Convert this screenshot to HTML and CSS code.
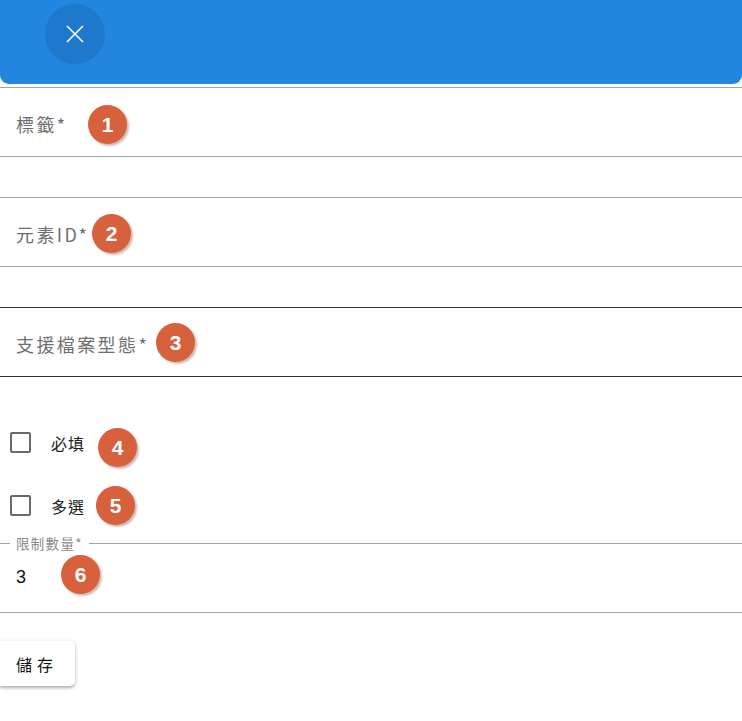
FILE: index.html
```html
<!DOCTYPE html>
<html lang="zh-Hant">
<head>
<meta charset="utf-8">
<title>Form</title>
<link rel="stylesheet" href="styles.css">
</head>
<body>
<div class="page">
  <header class="header">
    <button class="close" aria-label="close">
      <svg width="20" height="20" viewBox="0 0 20 20"><path d="M2 2L18 18M18 2L2 18" stroke="#fff" stroke-width="1.6" fill="none"/></svg>
    </button>
  </header>
  <div class="rule"></div>
  <form class="form">
    <div class="field"><span class="label">標籤*</span></div>
    <div class="field"><span class="label">元素ID*</span></div>
    <div class="field dark last"><span class="label">支援檔案型態*</span></div>
    <div class="checks">
      <label class="check"><span class="box"></span><span class="check-text">必填</span></label>
      <label class="check"><span class="box"></span><span class="check-text">多選</span></label>
    </div>
    <fieldset class="limit">
      <legend class="legend">限制數量*</legend>
      <div class="value">3</div>
    </fieldset>
    <div class="actions"><button type="button" class="save">儲存</button></div>
  </form>
  <span class="badge b1">1</span>
  <span class="badge b2">2</span>
  <span class="badge b3">3</span>
  <span class="badge b4">4</span>
  <span class="badge b5">5</span>
  <span class="badge b6">6</span>
</div>
</body>
</html>
```
FILE: styles.css
```css
html, body { margin: 0; padding: 0; background: #fff; }
body { font-family: "Noto Sans CJK TC", "Liberation Sans", sans-serif; }
.page { position: relative; width: 742px; height: 721px; overflow: hidden; }
.header {
  height: 84px; background: #2286e0; border-radius: 0 0 9px 9px;
  display: flex; align-items: flex-start; padding: 4px 0 0 45px; box-sizing: border-box;
}
.close {
  width: 60px; height: 60px; border-radius: 50%; border: none; background: #1e78cb;
  display: flex; align-items: center; justify-content: center; padding: 0; cursor: pointer;
}
.rule { height: 3px; }
.form { display: flex; flex-direction: column; }
.field {
  height: 65px; border-top: 1px solid #a3a3a3; border-bottom: 1px solid #a3a3a3;
  display: flex; align-items: center; padding: 3px 0 0 16px;
  margin-bottom: 40px;
}
.field.dark { border-color: #333; }
.field.last { margin-bottom: 34px; }
.label { font-size: 18px; color: #6e6e6e; letter-spacing: 2.4px; }
.checks { display: flex; flex-direction: column; }
.check { display: flex; align-items: center; height: 63px; }
.box {
  width: 17px; height: 17px; border: 2px solid #6a6a6a; border-radius: 2px; margin-left: 10px;
}
.check-text { font-size: 16px; color: #222; margin-left: 20px; letter-spacing: 1px; line-height: 1; }
.limit {
  margin: -4px 0 0 0; padding: 0 0 0 16px; border: none; border-top: 1px solid #a3a3a3;
  border-bottom: 1px solid #a3a3a3; height: 80px; box-sizing: border-box; min-width: 0;
}
.legend { font-size: 13.5px; color: #8a8a8a; padding: 0 6px; margin-left: -6px; letter-spacing: 1.3px; }
.value { font-size: 18px; color: #111; margin-top: 14px; font-family: "Liberation Sans", sans-serif; }
.actions { padding-top: 28px; }
.save {
  width: 75px; height: 45px; border: none; background: #fff; border-radius: 0 5px 5px 0;
  box-shadow: 0 2px 3px rgba(0,0,0,0.25), 0 1px 6px rgba(0,0,0,0.1);
  font-family: "Noto Sans CJK TC", sans-serif; font-size: 16px; letter-spacing: 5px; color: #111;
  padding: 0 0 0 16px; text-align: left;
}
.badge {
  position: absolute; width: 39px; height: 39px; border-radius: 50%; background: #d8613d;
  color: #fff; font-family: "Liberation Sans", sans-serif; font-weight: bold; font-size: 21px;
  display: flex; align-items: center; justify-content: center;
  box-shadow: 2px 2px 2px rgba(120,60,40,0.35);
}
.b1 { left: 88px; top: 105px; }
.b2 { left: 92px; top: 214px; }
.b3 { left: 156px; top: 323px; }
.b4 { left: 98px; top: 428px; }
.b5 { left: 96px; top: 486px; }
.b6 { left: 61px; top: 555px; }
```
